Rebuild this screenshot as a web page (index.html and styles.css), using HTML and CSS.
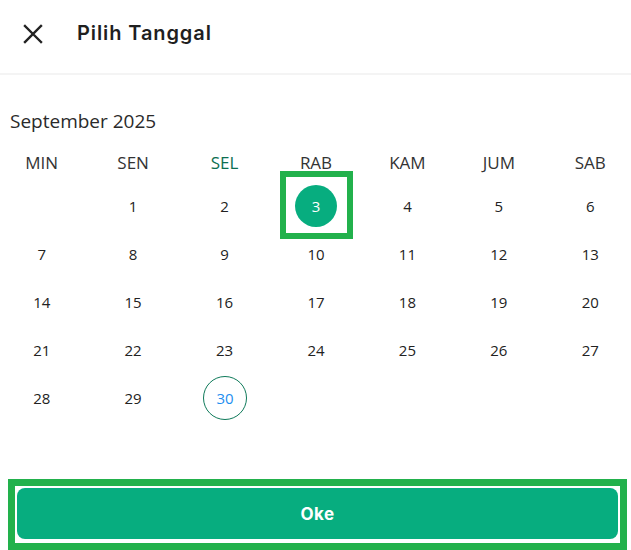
FILE: index.html
```html
<!DOCTYPE html>
<html lang="id">
<head>
<meta charset="utf-8">
<title>Pilih Tanggal</title>
<link rel="stylesheet" href="styles.css">
</head>
<body>
<div class="page">
  <header class="header">
    <button class="close" aria-label="Tutup">
      <svg width="20" height="20" viewBox="0 0 20 20"><path d="M2 2 L18 18 M18 2 L2 18" stroke="#222" stroke-width="2.4" stroke-linecap="square" fill="none"/></svg>
    </button>
    <h1 class="title">Pilih Tanggal</h1>
  </header>
  <main class="content">
    <div class="month">September 2025</div>
    <div class="grid">
      <div class="wd">MIN</div>
      <div class="wd">SEN</div>
      <div class="wd today-wd">SEL</div>
      <div class="wd">RAB</div>
      <div class="wd">KAM</div>
      <div class="wd">JUM</div>
      <div class="wd">SAB</div>

      <div class="day"></div>
      <div class="day">1</div>
      <div class="day">2</div>
      <div class="day"><span class="mark"></span><span class="sel">3</span></div>
      <div class="day">4</div>
      <div class="day">5</div>
      <div class="day">6</div>

      <div class="day">7</div>
      <div class="day">8</div>
      <div class="day">9</div>
      <div class="day">10</div>
      <div class="day">11</div>
      <div class="day">12</div>
      <div class="day">13</div>

      <div class="day">14</div>
      <div class="day">15</div>
      <div class="day">16</div>
      <div class="day">17</div>
      <div class="day">18</div>
      <div class="day">19</div>
      <div class="day">20</div>

      <div class="day">21</div>
      <div class="day">22</div>
      <div class="day">23</div>
      <div class="day">24</div>
      <div class="day">25</div>
      <div class="day">26</div>
      <div class="day">27</div>

      <div class="day">28</div>
      <div class="day">29</div>
      <div class="day"><span class="today">30</span></div>
      <div class="day"></div>
      <div class="day"></div>
      <div class="day"></div>
      <div class="day"></div>
    </div>
  </main>
  <footer class="footer">
    <div class="btn-mark">
      <button class="ok">Oke</button>
    </div>
  </footer>
</div>
</body>
</html>
```
FILE: styles.css
```css
* { box-sizing: border-box; }
html, body { margin: 0; padding: 0; background: #fff; }
body { overflow: hidden; width: 631px; height: 550px; }
.page { width: 631px; height: 550px; display: flex; flex-direction: column; }

.header {
  height: 75px;
  border-bottom: 2px solid #f4f4f4;
  display: flex;
  align-items: center;
  padding-left: 23px;
  padding-bottom: 8px;
  gap: 34px;
}
.close {
  border: 0; background: none; padding: 0; width: 20px; height: 20px;
  display: flex; margin-top: 2px;
}
.title {
  margin: 0;
  font-family: Inter, "DejaVu Sans", sans-serif;
  font-weight: 600;
  font-size: 20px;
  color: #1f1f1f;
  letter-spacing: 0.9px;
}

.content { padding-top: 34px; }
.month {
  font-family: "Open Sans", "Noto Sans", sans-serif;
  font-size: 19px;
  line-height: 24px;
  color: #2a2a2a;
  padding-left: 10px;
}
.grid {
  width: 640px;
  margin-left: -4px;
  display: grid;
  grid-template-columns: repeat(7, 1fr);
  grid-template-rows: 40px repeat(5, 48px);
  margin-top: 9px;
  font-family: "Open Sans", "Noto Sans", sans-serif;
  color: #2a2a2a;
}
.wd {
  display: flex; align-items: center; justify-content: center;
  font-size: 17px;
  color: #333;
}
.today-wd { color: #0d6e51; }
.day {
  position: relative;
  display: flex; align-items: center; justify-content: center;
  font-size: 15px;
  color: #222;
}
.sel {
  width: 42px; height: 42px; border-radius: 50%;
  background: #07ad7f; color: #fff;
  display: flex; align-items: center; justify-content: center;
  margin-top: -1px;
}
.mark {
  position: absolute;
  left: 50%; top: 50%;
  width: 73px; height: 68px;
  transform: translate(-36px, -35px);
  border: 6px solid #22b14c;
}
.today {
  width: 44px; height: 44px; border-radius: 50%;
  border: 1px solid #0f7a5a;
  color: #1e8ff0;
  display: flex; align-items: center; justify-content: center;
  margin-left: 1px;
}

.footer {
  margin-top: auto;
  padding: 0 4px 0 8px;
}
.btn-mark {
  border: 7px solid #22b14c;
  padding: 2px 2px 0 2px;
  height: 71px;
}
.ok {
  display: block;
  width: 100%;
  height: 51px;
  border: 0;
  border-radius: 8px;
  background: #07ad7f;
  color: #fff;
  font-family: Inter, "DejaVu Sans", sans-serif;
  font-weight: 700;
  font-size: 17px;
  letter-spacing: 0.5px;
}
```
